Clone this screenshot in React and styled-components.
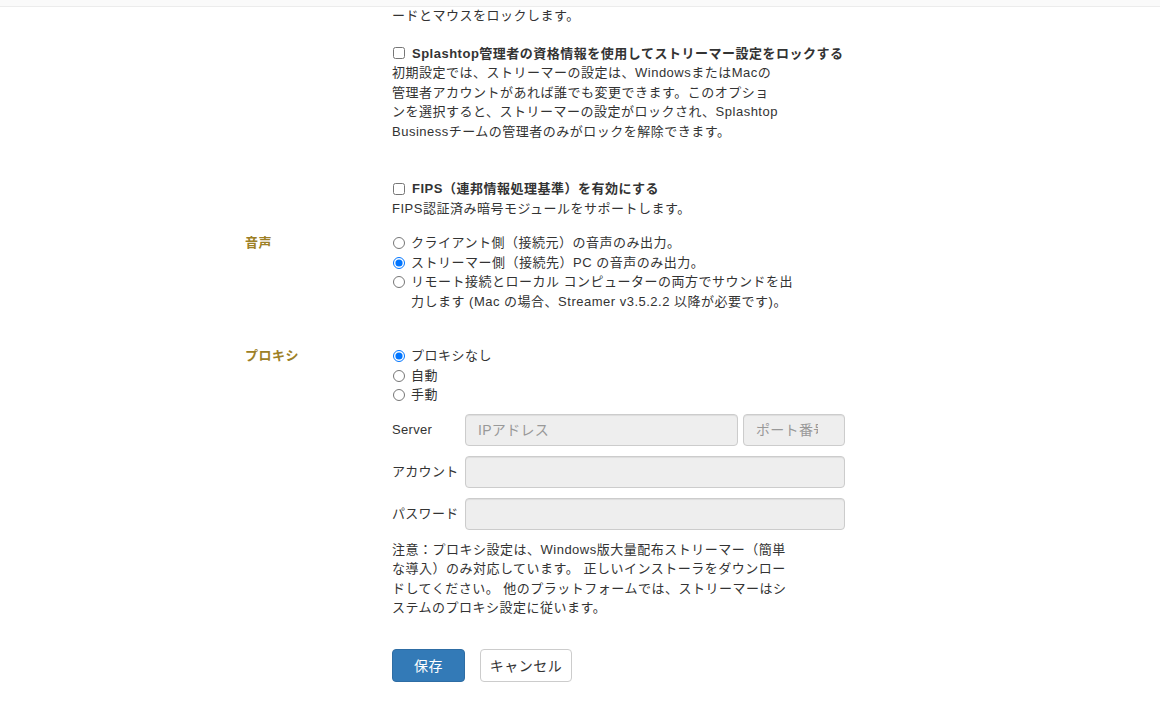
import React from 'react';
import styled, { createGlobalStyle } from 'styled-components';

const GlobalStyle = createGlobalStyle`
  html, body {
    margin: 0;
    padding: 0;
    background: #fff;
  }
  body {
    font-family: "Liberation Sans", "Noto Sans CJK JP", sans-serif;
    font-size: 13px;
    line-height: 19.5px;
    letter-spacing: 0.5px;
    color: #333;
  }
`;

const audioOptions = [
  { id: 'client', text: ['クライアント側（接続元）の音声のみ出力。'] },
  { id: 'streamer', text: ['ストリーマー側（接続先）PC の音声のみ出力。'], checked: true },
  {
    id: 'both',
    text: [
      'リモート接続とローカル コンピューターの両方でサウンドを出',
      '力します (Mac の場合、Streamer v3.5.2.2 以降が必要です)。',
    ],
  },
];

const proxyOptions = [
  { id: 'none', text: ['プロキシなし'], checked: true },
  { id: 'auto', text: ['自動'] },
  { id: 'manual', text: ['手動'] },
];

const Lines = ({ lines }) =>
  lines.map((l, i) => (
    <React.Fragment key={i}>
      {i > 0 && <br />}
      {l}
    </React.Fragment>
  ));

const RadioGroup = ({ name, options }) => (
  <div>
    {options.map(o => (
      <RadioRow key={o.id}>
        <Radio type="radio" name={name} defaultChecked={o.checked} />
        <span>
          <Lines lines={o.text} />
        </span>
      </RadioRow>
    ))}
  </div>
);

export default function App() {
  return (
    <>
      <GlobalStyle />
      <TopBar />
      <Page>
        <Row $top={-1}>
          <Label />
          <Field>
            <Text>ードとマウスをロックします。</Text>
          </Field>
        </Row>

        <Row $top={18}>
          <Label />
          <Field>
            <CheckRow>
              <Check type="checkbox" />
              <strong>Splashtop管理者の資格情報を使用してストリーマー設定をロックする</strong>
            </CheckRow>
            <Text>
              <Lines
                lines={[
                  '初期設定では、ストリーマーの設定は、WindowsまたはMacの',
                  '管理者アカウントがあれば誰でも変更できます。このオプショ',
                  'ンを選択すると、ストリーマーの設定がロックされ、Splashtop',
                  'Businessチームの管理者のみがロックを解除できます。',
                ]}
              />
            </Text>
          </Field>
        </Row>

        <Row $top={38}>
          <Label />
          <Field>
            <CheckRow>
              <Check type="checkbox" />
              <strong>FIPS（連邦情報処理基準）を有効にする</strong>
            </CheckRow>
            <Text>FIPS認証済み暗号モジュールをサポートします。</Text>
          </Field>
        </Row>

        <Row $top={15}>
          <Label>音声</Label>
          <Field>
            <RadioGroup name="audio" options={audioOptions} />
          </Field>
        </Row>

        <Row $top={35}>
          <Label>プロキシ</Label>
          <Field>
            <RadioGroup name="proxy" options={proxyOptions} />

            <ProxyForm>
              <FormRow>
                <FormLabel>Server</FormLabel>
                <Inputs>
                  <Input disabled placeholder="IPアドレス" />
                  <Input disabled placeholder="ポート番号" $port />
                </Inputs>
              </FormRow>
              <FormRow>
                <FormLabel>アカウント</FormLabel>
                <Inputs>
                  <Input disabled />
                </Inputs>
              </FormRow>
              <FormRow>
                <FormLabel>パスワード</FormLabel>
                <Inputs>
                  <Input disabled type="password" />
                </Inputs>
              </FormRow>
            </ProxyForm>

            <Note>
              <Lines
                lines={[
                  '注意：プロキシ設定は、Windows版大量配布ストリーマー（簡単',
                  'な導入）のみ対応しています。 正しいインストーラをダウンロー',
                  'ドしてください。 他のプラットフォームでは、ストリーマーはシ',
                  'ステムのプロキシ設定に従います。',
                ]}
              />
            </Note>
          </Field>
        </Row>

        <Row $top={31}>
          <Label />
          <Buttons>
            <Button $primary>保存</Button>
            <Button>キャンセル</Button>
          </Buttons>
        </Row>
      </Page>
    </>
  );
}

const TopBar = styled.div`
  height: 6px;
  background: #fafafa;
  border-bottom: 1px solid #ececec;
`;

const Page = styled.div`
  padding: 0 0 40px 245px;
`;

const Row = styled.div`
  display: grid;
  grid-template-columns: 147px 460px;
  margin-top: ${p => p.$top}px;
`;

const Label = styled.div`
  font-weight: bold;
  color: #9d8026;
`;

const Field = styled.div`
  display: flex;
  flex-direction: column;
`;

const Text = styled.div`
  white-space: nowrap;
`;

const CheckRow = styled.label`
  display: flex;
  align-items: center;
  white-space: nowrap;

  strong {
    font-weight: bold;
  }
`;

const Check = styled.input`
  width: 12px;
  height: 12px;
  margin: 0 7px 0 1px;
`;

const RadioRow = styled.label`
  display: flex;
  align-items: flex-start;
  white-space: nowrap;
`;

const Radio = styled.input`
  width: 12px;
  height: 12px;
  margin: 4px 6px 0 1px;
  flex: none;
`;

const ProxyForm = styled.div`
  display: flex;
  flex-direction: column;
  gap: 10px;
  margin-top: 9px;
`;

const FormRow = styled.div`
  display: flex;
  align-items: center;
`;

const FormLabel = styled.div`
  width: 73px;
  flex: none;
  white-space: nowrap;
  letter-spacing: 0.3px;
`;

const Inputs = styled.div`
  display: flex;
  gap: 5px;
  width: 380px;
`;

const Input = styled.input`
  box-sizing: border-box;
  height: 32px;
  flex: ${p => (p.$port ? '0 0 102px' : '1')};
  min-width: 0;
  padding: ${p => (p.$port ? '6px 26px 6px 12px' : '6px 12px')};
  font-family: inherit;
  font-size: 14px;
  letter-spacing: 0.3px;
  color: #555;
  background: #eee;
  border: 1px solid #ccc;
  border-radius: 4px;
  box-shadow: inset 0 1px 1px rgba(0, 0, 0, 0.075);

  &::placeholder {
    color: #999;
  }
`;

const Note = styled.div`
  margin-top: 10px;
  white-space: nowrap;
`;

const Buttons = styled.div`
  display: flex;
  gap: 15px;
`;

const Button = styled.button`
  box-sizing: border-box;
  height: 33px;
  width: ${p => (p.$primary ? '73px' : '92px')};
  font-family: inherit;
  font-size: 14px;
  letter-spacing: 0.5px;
  color: ${p => (p.$primary ? '#fff' : '#333')};
  background: ${p => (p.$primary ? '#337ab7' : '#fff')};
  border: 1px solid ${p => (p.$primary ? '#2e6da4' : '#ccc')};
  border-radius: 4px;
  cursor: pointer;
`;
